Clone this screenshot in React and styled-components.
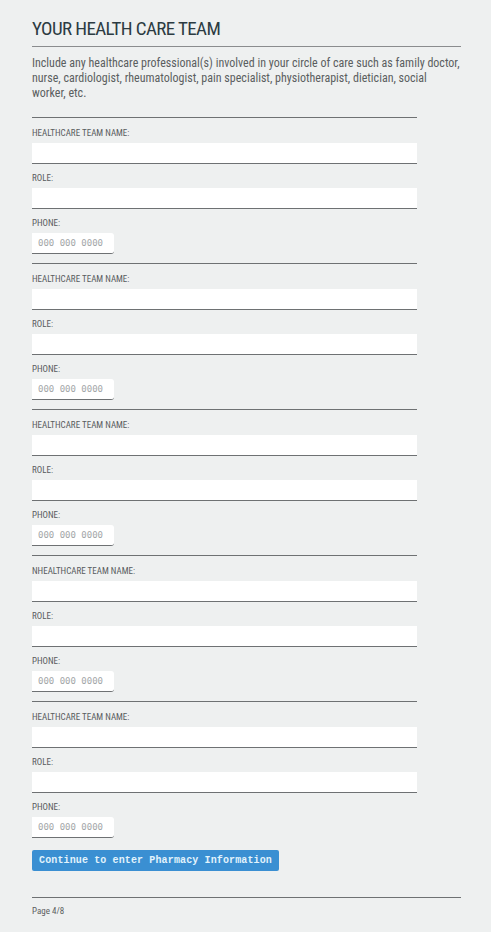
import React from 'react';
import styled, { createGlobalStyle } from 'styled-components';

const GlobalStyle = createGlobalStyle`
  html, body {
    margin: 0;
    padding: 0;
    background: #eef0f0;
  }
  body {
    font-family: "Roboto Condensed", "Liberation Sans Narrow", "DejaVu Sans Condensed", Roboto, sans-serif;
    font-stretch: condensed;
  }
`;

const Page = styled.div`
  padding: 17px 30px 12px 32px;
  width: 429px;
`;

const Title = styled.h1`
  margin: 0;
  font-size: 19px;
  line-height: 24px;
  font-weight: 400;
  letter-spacing: -0.6px;
  color: #2c3b42;
  padding-bottom: 5px;
  border-bottom: 1px solid #8a8c8e;
`;

const Intro = styled.p`
  margin: 9px 0 16px;
  font-size: 12px;
  line-height: 15px;
  color: #5b5e60;
`;

const Form = styled.form`
  width: 385px;
  display: flex;
  flex-direction: column;
`;

const Section = styled.div`
  border-top: 1px solid #6e7173;
  padding: 10px 0 9px;
  display: flex;
  flex-direction: column;
  gap: 9px;
`;

const Field = styled.label`
  display: flex;
  flex-direction: column;
  gap: 5px;
`;

const Label = styled.span`
  font-size: 9px;
  line-height: 10px;
  color: #595c5e;
  text-transform: uppercase;
`;

const Input = styled.input`
  box-sizing: border-box;
  width: ${p => (p.$short ? '82px' : '100%')};
  height: 21px;
  border: none;
  border-bottom: 1px solid #6e7173;
  border-radius: ${p => (p.$short ? '0 3px 3px 0' : '0')};
  background: #fff;
  padding: 0 6px;
  font-family: "DejaVu Sans Mono", "Liberation Mono", monospace;
  font-size: 9px;
  color: #333;
  outline: none;
  &::placeholder {
    color: #a3a6a8;
  }
`;

const Button = styled.button`
  align-self: flex-start;
  box-sizing: border-box;
  margin-top: 3px;
  height: 21px;
  padding: 0 7px;
  border: none;
  border-radius: 2px;
  background: #3a8fd2;
  color: #e2f3fc;
  font-family: "Liberation Mono", "DejaVu Sans Mono", monospace;
  font-weight: 700;
  font-size: 10px;
  letter-spacing: 0.13px;
  cursor: pointer;
`;

const Footer = styled.div`
  margin-top: 26px;
  border-top: 1px solid #6e7173;
  padding-top: 7px;
  font-size: 9px;
  line-height: 12px;
  color: #5b5e60;
`;

const members = [
  'Healthcare Team Name:',
  'Healthcare Team Name:',
  'Healthcare Team Name:',
  'NHealthcare Team Name:',
  'Healthcare Team Name:',
];

function Member({ nameLabel }) {
  return (
    <Section>
      <Field>
        <Label>{nameLabel}</Label>
        <Input type="text" />
      </Field>
      <Field>
        <Label>Role:</Label>
        <Input type="text" />
      </Field>
      <Field>
        <Label>Phone:</Label>
        <Input type="tel" $short placeholder="000 000 0000" />
      </Field>
    </Section>
  );
}

export default function App() {
  return (
    <Page>
      <GlobalStyle />
      <Title>YOUR HEALTH CARE TEAM</Title>
      <Intro>
        Include any healthcare professional(s) involved in your circle of care such as family doctor,
        nurse, cardiologist, rheumatologist, pain specialist, physiotherapist, dietician, social
        worker, etc.
      </Intro>
      <Form onSubmit={e => e.preventDefault()}>
        {members.map((m, i) => (
          <Member key={i} nameLabel={m} />
        ))}
        <Button type="submit">Continue to enter Pharmacy Information</Button>
      </Form>
      <Footer>Page 4/8</Footer>
    </Page>
  );
}
